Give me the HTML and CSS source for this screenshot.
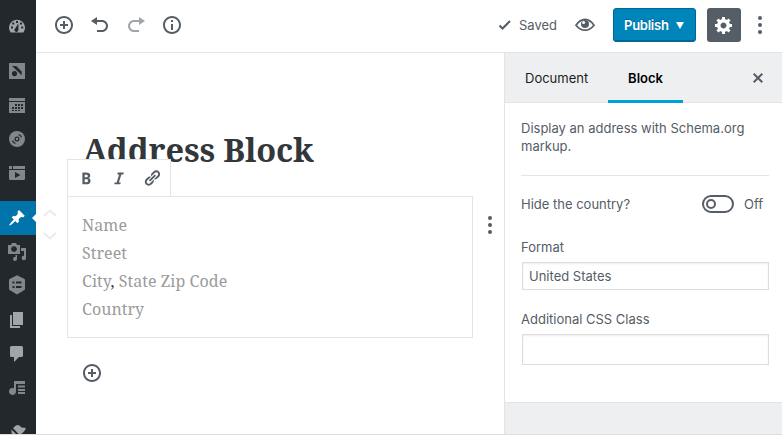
FILE: index.html
```html
<!DOCTYPE html>
<html lang="en">
<head>
<meta charset="utf-8">
<title>Address Block</title>
<link rel="stylesheet" href="styles.css">
</head>
<body>
<div class="app">
  <nav class="menu">
    <a class="menu-item"><svg width="18" height="18" viewBox="0 0 18 18"><path fill-rule="evenodd" d="M2.600 15.500A8 8 0 1 1 15.400 15.500ZM8 4h2v2H8ZM4.200 5.600h2v2h-2ZM12 5.600h2v2h-2ZM3 9.400h2v2H3ZM13.200 9.400h2v2h-2ZM10.400 6.200L7.400 11.200a2 2 0 1 0 3 1.900Z"/></svg></a>
    <span class="menu-gap"></span>
    <a class="menu-item dim"><svg width="18" height="18" viewBox="0 0 18 18"><path fill-rule="evenodd" d="M1 1h16v16H1ZM4 4l9.700 9.200V9.600L8.200 4ZM6.500 9a2.600 2.600 0 1 0 .01 0Z"/></svg></a>
    <a class="menu-item dim"><svg width="18" height="18" viewBox="0 0 18 18"><path fill-rule="evenodd" d="M1 2h16v3H1ZM1 6h16v11H1ZM7 8v2h2V8ZM10 8v2h2V8ZM13 8v2h2V8ZM4 11v2h2v-2ZM7 11v2h2v-2ZM10 11v2h2v-2ZM13 11v2h2v-2ZM4 14v1h2v-1ZM7 14v1h2v-1ZM10 14v1h2v-1Z"/></svg></a>
    <a class="menu-item dim"><svg width="18" height="18" viewBox="0 0 18 18"><circle cx="9" cy="9" r="8"/><g fill="none" stroke="#23282d"><circle cx="9" cy="9" r="1.900" stroke-width="1.200"/><path stroke-width="1.300" d="M4.500 10.600Q5.200 12.700 7.400 13.500M10.600 4.500Q12.800 5.300 13.500 7.400"/></g></svg></a>
    <a class="menu-item dim"><svg width="18" height="18" viewBox="0 0 18 18"><path fill-rule="evenodd" d="M1 2h3v3H1ZM5 2h12v3H5ZM1 6h16v8.500q0 1.500-1.500 1.500h-13Q1 16 1 14.500ZM7 8v6l5.500-3Z"/></svg></a>
    <span class="menu-gap"></span>
    <a class="menu-item current"><svg width="18" height="18" viewBox="0 0 20 20"><path d="M10.440 3.020l1.820-1.820 6.360 6.350-1.830 1.820c-1.050-.68-2.480-.57-3.410.36l-.75.75c-.92.93-1.040 2.350-.35 3.410l-1.830 1.820-2.410-2.410-2.800 2.790c-.42.42-3.380 2.710-3.800 2.290s1.860-3.390 2.280-3.810l2.790-2.790L4.100 9.360l1.830-1.820c1.050.69 2.480.57 3.400-.36l.75-.75c.93-.92 1.050-2.350.36-3.410z"/></svg></a>
    <a class="menu-item dim"><svg width="18" height="18" viewBox="0 0 18 18"><path fill-rule="evenodd" d="M0 2h3l1-2h4l1 2h3v9H0ZM6 3.200a2.900 2.900 0 1 0 .01 0ZM13 5h5v10a2.200 2.200 0 1 1-2-2.200V8h-3ZM9 12v4a2 2 0 1 1-2-2h.5v-2Z"/></svg></a>
    <a class="menu-item dim"><svg class="hex" width="18" height="20" viewBox="0 0 18 20"><path fill-rule="evenodd" d="M9 .2L16.600 4Q17 4.300 17 5v9q0 .7-.6 1L9 19.400 1.600 15Q1 14.700 1 14V5q0-.7.6-1ZM4.500 6.500v2h2v-2ZM8 6.500v2h5.500v-2ZM4.500 11v2h2v-2ZM8 11v2h5.500v-2Z"/></svg></a>
    <a class="menu-item"><svg width="18" height="18" viewBox="0 0 18 18"><path d="M5 1h10v13H5ZM2 4h2v11h8v2H2Z"/></svg></a>
    <a class="menu-item"><svg width="18" height="18" viewBox="0 0 18 18"><path d="M3.500 1h10Q15 1 15 2.500v8q0 1.500-1.500 1.500H11l-5 5v-5H3.500Q2 12 2 10.500v-8Q2 1 3.500 1Z"/></svg></a>
    <a class="menu-item dim"><svg width="18" height="18" viewBox="0 0 18 18"><path d="M6 2h11v3H8v7.500a3.500 3.500 0 1 1-2-3.200ZM10 6.500h7v2h-7ZM10 10h7v2h-7ZM10 13h7v2h-7Z"/></svg></a>
    <span class="menu-gap"></span>
    <a class="menu-item"><svg width="18" height="18" viewBox="0 0 18 18"><path d="M5 4L8 1.500q2-1 4 .5l1.500 1.500L18 4q-1 3-4 5.500l-3 1ZM3.500 5.500l7 7-2 1.500-5-5Z"/></svg></a>
  </nav>

  <div class="editor">
    <header class="topbar">
      <div class="tools">
        <svg width="20" height="20" viewBox="0 0 20 20"><path d="M10 1c-5 0-9 4-9 9s4 9 9 9 9-4 9-9-4-9-9-9zm0 16c-3.900 0-7-3.100-7-7s3.100-7 7-7 7 3.100 7 7-3.100 7-7 7zm1-11H9v3H6v2h3v3h2v-3h3V9h-3V6z"/></svg>
        <svg width="20" height="20" viewBox="0 0 20 20"><path d="M12 5H7V2L1 6l6 4V7h5c2.200 0 4 1.800 4 4s-1.800 4-4 4H7v2h5c3.300 0 6-2.700 6-6s-2.700-6-6-6z"/></svg>
        <svg class="disabled" width="20" height="20" viewBox="0 0 20 20"><path d="M8 5h5V2l6 4-6 4V7H8c-2.200 0-4 1.800-4 4s1.800 4 4 4h5v2H8c-3.300 0-6-2.700-6-6s2.700-6 6-6z"/></svg>
        <svg width="20" height="20" viewBox="0 0 20 20"><path d="M10 1c-5 0-9 4-9 9s4 9 9 9 9-4 9-9-4-9-9-9zm0 16c-3.900 0-7-3.100-7-7s3.100-7 7-7 7 3.100 7 7-3.100 7-7 7zM9 5h2v2H9zM9 9h2v6H9z"/></svg>
      </div>
      <div class="saved">
        <svg width="14" height="12" viewBox="0 0 14 12"><path class="stroke" stroke-width="2" d="M1.500 6.500L4.500 9.500 12 2"/></svg>
        <span>Saved</span>
      </div>
      <svg class="eye" width="20" height="14" viewBox="0 0 20 14"><path class="stroke" stroke-width="1.700" d="M1 7.200Q5 1.300 10 1.300T19 7.200Q15 12.200 10 12.200T1 7.200Z"/><circle cx="10" cy="6" r="4"/><circle cx="8.600" cy="4.500" r="1.500" fill="#fff"/></svg>
      <button class="publish"><span>Publish</span><i></i></button>
      <button class="settings"><svg width="20" height="20" viewBox="0 0 20 20"><path d="M18 12h-2.180c-.17.7-.44 1.350-.81 1.930l1.540 1.540-2.100 2.100-1.540-1.540c-.58.36-1.230.63-1.910.79V19H8v-2.180c-.68-.16-1.330-.43-1.910-.79l-1.540 1.540-2.120-2.120 1.540-1.540c-.36-.58-.63-1.230-.79-1.910H1V9.030h2.170c.16-.7.44-1.350.8-1.940L2.430 5.550l2.100-2.100 1.540 1.540c.58-.37 1.240-.64 1.930-.81V2h3v2.180c.68.16 1.330.43 1.910.79l1.540-1.540 2.120 2.120-1.540 1.540c.36.59.64 1.240.8 1.940H18V12zm-8.500 1.500c1.660 0 3-1.340 3-3s-1.340-3-3-3-3 1.340-3 3 1.340 3 3 3z"/></svg></button>
      <svg class="more" width="4" height="18" viewBox="0 0 4 18"><circle cx="2" cy="2" r="2"/><circle cx="2" cy="9" r="2"/><circle cx="2" cy="16" r="2"/></svg>
    </header>

    <div class="workspace">
      <main class="canvas">
        <h1 class="title">Address Block</h1>
        <div class="block-row">
          <div class="movers">
            <svg width="14" height="8" viewBox="0 0 14 8"><path d="M1 7L7 1.500 13 7"/></svg>
            <svg width="14" height="8" viewBox="0 0 14 8"><path d="M1 1L7 6.500 13 1"/></svg>
          </div>
          <section class="block">
            <div class="toolbar">
              <svg width="18" height="18" viewBox="0 0 20 20"><path d="M6 4v13h4.540c1.370 0 2.460-.33 3.260-1 .8-.66 1.200-1.580 1.200-2.770 0-.84-.17-1.510-.51-2.010s-.9-.85-1.670-1.030v-.09c.57-.1 1.020-.4 1.360-.9s.51-1.130.51-1.910c0-1.140-.39-1.980-1.170-2.500C12.750 4.260 11.500 4 9.780 4H6zm2.570 5.150V6.260h1.360c.73 0 1.270.11 1.610.32.34.22.51.58.51 1.070 0 .54-.16.92-.47 1.150s-.82.35-1.510.35h-1.500zm0 2.190h1.600c1.440 0 2.160.53 2.160 1.610 0 .6-.17 1.050-.51 1.340s-.86.43-1.570.43H8.570v-3.380z"/></svg>
              <svg width="18" height="18" viewBox="0 0 20 20"><path d="M14.780 6h-2.130l-2.800 9h2.120l-.62 2H4.600l.62-2h2.140l2.800-9H8.030l.62-2h6.750z"/></svg>
              <svg width="18" height="18" viewBox="0 0 20 20"><path d="M17.740 2.760c1.680 1.690 1.680 4.410 0 6.100l-1.530 1.520c-1.120 1.120-2.700 1.470-4.140 1.090l2.620-2.610.76-.77.76-.76c.84-.84.84-2.200 0-3.040-.84-.85-2.200-.85-3.040 0l-.77.76-3.380 3.380c-.37-1.440-.02-3.020 1.100-4.140l1.520-1.530c1.690-1.680 4.420-1.680 6.100 0zM8.590 13.430l5.340-5.340c.42-.42.42-1.100 0-1.520-.44-.43-1.130-.39-1.530 0l-5.330 5.340c-.42.42-.42 1.100 0 1.520.44.43 1.130.39 1.520 0zm-.76 2.290l4.140-4.150c.38 1.440.03 3.020-1.090 4.140l-1.520 1.530c-1.690 1.680-4.410 1.680-6.100 0-1.680-1.680-1.680-4.420 0-6.100l1.530-1.520c1.120-1.120 2.700-1.470 4.140-1.100l-4.140 4.150c-.85.84-.85 2.200 0 3.050.84.84 2.200.84 3.040 0z"/></svg>
            </div>
            <p>Name</p>
            <p>Street</p>
            <p>City<b>,</b> State Zip Code</p>
            <p>Country</p>
          </section>
          <svg class="more block-more" width="4" height="18" viewBox="0 0 4 18"><circle cx="2" cy="2" r="2"/><circle cx="2" cy="9" r="2"/><circle cx="2" cy="16" r="2"/></svg>
        </div>
        <svg class="inserter" width="20" height="20" viewBox="0 0 20 20"><path d="M10 1c-5 0-9 4-9 9s4 9 9 9 9-4 9-9-4-9-9-9zm0 16c-3.900 0-7-3.100-7-7s3.100-7 7-7 7 3.100 7 7-3.100 7-7 7zm1-11H9v3H6v2h3v3h2v-3h3V9h-3V6z"/></svg>
      </main>

      <aside class="panel">
        <div class="tabs">
          <a class="tab document">Document</a>
          <a class="tab active">Block</a>
          <svg class="close" width="10" height="10" viewBox="0 0 10 10"><path class="stroke" stroke-width="2" d="M.7.700l8.600 8.600M9.300.700L.7 9.300"/></svg>
        </div>
        <div class="panel-body">
          <p class="description">Display an address with Schema.org markup.</p>
          <div class="toggle-row">
            <span>Hide the country?</span>
            <span class="toggle"></span>
            <span class="off">Off</span>
          </div>
          <label class="label-format">Format</label>
          <div class="select">United States</div>
          <label class="label-css">Additional CSS Class</label>
          <input class="input" type="text">
        </div>
      </aside>
    </div>
  </div>
</div>
</body>
</html>
```
FILE: styles.css
```css
*, *::before { box-sizing: border-box; }
body {
  margin: 0;
  background: #fff;
  color: #555d66;
  font: 13px/18px Inter, "Liberation Sans", sans-serif;
}
svg { display: block; flex: none; fill: #555d66; }
.stroke { fill: none; stroke: #555d66; }
h1, p { margin: 0; }
button { border: 0; padding: 0; font: inherit; }

.app {
  display: flex;
  width: 782px;
  height: 435px;
  border-bottom: 1px solid #dcdddf;
  overflow: hidden;
}

/* Admin menu */
.menu {
  display: flex;
  flex-direction: column;
  flex: none;
  width: 36px;
  padding-top: 9px;
  background: #23282d;
  overflow: hidden;
}
.menu-item {
  display: flex;
  position: relative;
  flex: none;
  align-items: center;
  height: 34px;
  padding-left: 8px;
}
.menu-item svg { fill: #a0a5aa; }
.menu-item.dim svg { fill: #82878c; }
.menu-item .hex { margin-top: -3px; }
.menu-gap { flex: none; height: 11px; }
.menu-item.current { background: #0073aa; }
.menu-item.current svg { fill: #fff; }
.current::after {
  content: "";
  position: absolute;
  right: 0;
  top: 13px;
  border: 4px solid transparent;
  border-left: 0;
  border-right-color: #fff;
}

/* Top bar */
.editor { display: flex; flex-direction: column; flex: 1; min-width: 0; }
.topbar {
  display: flex;
  align-items: center;
  flex: none;
  height: 53px;
  padding: 0 20px 2px 18px;
  border-bottom: 1px solid #e2e4e7;
}
.tools { display: flex; gap: 16px; }
.disabled { opacity: 0.55; }
.saved { display: flex; align-items: center; gap: 7px; margin-left: auto; }
.eye { margin-left: 18px; }
.publish {
  display: flex;
  align-items: center;
  gap: 7px;
  width: 83px;
  height: 34px;
  margin-left: 18px;
  padding-left: 10px;
  border: 1px solid #006799;
  border-radius: 3px;
  background: #0085ba;
  box-shadow: inset 0 -1px 0 #006799;
  color: #fff;
  font-weight: 600;
  letter-spacing: -0.25px;
  text-shadow: 0 -1px 1px #006799;
}
.publish i {
  margin-top: 1px;
  border: 4px solid transparent;
  border-top: 7px solid #fff;
  border-bottom: 0;
}
.settings {
  display: grid;
  place-items: center;
  width: 34px;
  height: 34px;
  margin-left: 11px;
  border-radius: 3px;
  background: #555d66;
}
.settings svg { fill: #fff; }
.topbar > .more { margin-left: 17px; }

/* Editing canvas */
.workspace { display: flex; flex: 1; min-height: 0; }
.canvas { width: 468px; padding-top: 75px; }
.title {
  height: 68px;
  padding-left: 47px;
  color: #32373c;
  font: bold 32.500px/44px "Noto Serif", "DejaVu Serif Condensed", "DejaVu Serif", serif;
  font-stretch: condensed;
  letter-spacing: -0.13px;
  white-space: nowrap;
}
.block-row { display: flex; }
.movers {
  display: flex;
  flex-direction: column;
  gap: 15px;
  width: 31px;
  padding: 13px 0 0 7px;
}
.movers path { fill: none; stroke: #e8eaeb; stroke-width: 2; }
.block {
  position: relative;
  width: 406px;
  height: 142px;
  padding: 14px;
  border: 1px solid #e2e4e7;
  color: #9b9b9b;
  font: 16px/28px "Noto Serif", "DejaVu Serif Condensed", "DejaVu Serif", serif;
  font-stretch: condensed;
  letter-spacing: 0.06px;
}
.block b { color: #32373c; font-weight: normal; }
.toolbar {
  display: flex;
  position: absolute;
  left: -1px;
  top: -38px;
  align-items: center;
  gap: 15px;
  width: 104px;
  height: 38px;
  padding-left: 9px;
  border: 1px solid #e2e4e7;
  background: #fff;
}
.block-more { margin: 20px 0 0 15px; }
.inserter { margin: 25px 0 0 46px; }

/* Settings panel */
.panel {
  flex: 1;
  border-left: 1px solid #e2e4e7;
  background: #edeff0;
}
.tabs {
  display: flex;
  height: 50px;
  border-bottom: 1px solid #e2e4e7;
  color: #191e23;
}
.tab { line-height: 51px; }
.document { width: 103px; padding-left: 20px; }
.active {
  width: 75px;
  height: 50px;
  border-bottom: 3px solid #00a0d2;
  color: #000;
  font-weight: 600;
  text-align: center;
}
.close { margin: 20px 0 0 70px; }
.panel-body {
  height: 300px;
  padding: 16px 13px 0 16px;
  border-bottom: 1px solid #e2e4e7;
  background: #fff;
}
.description { height: 57px; border-bottom: 1px solid #e2e4e7; }
.toggle-row { display: flex; align-items: center; height: 18px; margin-top: 19px; }
.toggle {
  width: 32px;
  height: 18px;
  margin-left: auto;
  padding: 2px;
  border: 2px solid #555d66;
  border-radius: 9px;
}
.toggle::before {
  content: "";
  display: block;
  width: 10px;
  height: 10px;
  border: 2px solid #555d66;
  border-radius: 50%;
}
.off { width: 25px; margin-left: 10px; }
.label-format, .label-css { display: block; }
.label-format { margin-top: 25px; }
.select, .input {
  display: block;
  width: 247px;
  margin-left: 1px;
  border: 1px solid #ddd;
  background: #fff;
  box-shadow: inset 0 1px 2px rgba(0, 0, 0, 0.07);
}
.select { height: 28px; margin-top: 6px; padding-left: 6px; line-height: 27px; }
.label-css { margin-top: 20px; }
.input { height: 31px; margin-top: 6px; border-radius: 0; }
```
